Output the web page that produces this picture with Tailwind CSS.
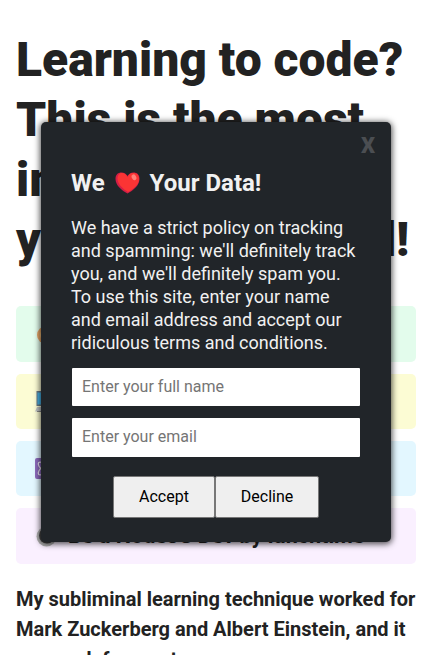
<!DOCTYPE html>
<html lang="en">
<head>
<meta charset="utf-8">
<title>Learning to code?</title>
<script src="https://cdn.jsdelivr.net/npm/@tailwindcss/browser@4"></script>
</head>
<body class="h-[655px] overflow-hidden bg-white font-[Roboto,sans-serif] text-[#222]">
<main class="px-4 pt-[30px]">
  <h1 class="text-[48px] leading-[60px] font-black whitespace-nowrap">Learning to code?<br>This is the most<br>important thing<br>you will ever read!</h1>
  <ul class="mt-[36px] flex flex-col gap-3 text-[21.6px] font-bold whitespace-nowrap">
    <li class="flex h-14 items-center gap-[11px] rounded-[5px] bg-[#e3fcec] pl-5">
      <svg class="size-5 shrink-0" viewBox="0 0 20 20"><circle cx="10" cy="11" r="9" fill="#e9a868"/><circle cx="10" cy="11" r="6" fill="#f4c27a"/></svg>
      <span>Become a 10X developer</span>
    </li>
    <li class="flex h-[55px] items-center gap-[11px] rounded-[5px] bg-[#fcfcd4] pl-[19px]">
      <svg class="size-[22px] shrink-0" viewBox="0 0 22 22"><path d="M1.500 0h19v15h-19z" fill="#697985"/><path d="M2.500 1.500h17v12h-17z" fill="#48b4e8"/><path d="M2 16h18l2 4.500H0z" fill="#c0c4c4"/><path d="M2 20.500h20" stroke="#888"/></svg>
      <span>Learn while you sleep</span>
    </li>
    <li class="flex h-[55px] items-center gap-[11px] rounded-[5px] bg-[#e3f7ff] pl-[19px]">
      <svg class="size-[21px] shrink-0" viewBox="0 0 21 21" fill="none" stroke="#eee8f4" stroke-width="1.200"><rect width="21" height="21" rx="2" fill="#8d6bbd" stroke="none"/><ellipse cx="10.500" cy="10.500" rx="9" ry="3.500" transform="rotate(40 10.500 10.500)"/><ellipse cx="10.500" cy="10.500" rx="9" ry="3.500" transform="rotate(140 10.500 10.500)"/></svg>
      <span>Know more React than Zuck</span>
    </li>
    <li class="flex h-14 items-center gap-[11px] rounded-[5px] bg-[#faf0ff] pl-5">
      <svg class="size-[21px] shrink-0" viewBox="0 0 21 21"><circle cx="10.500" cy="10.500" r="10" fill="#b0b0b0"/><circle cx="11" cy="9.500" r="8" fill="#454545"/></svg>
      <span>Be a NodeJS Dev by lunchtime</span>
    </li>
  </ul>
  <p class="mt-5 text-[20px] leading-[30px] font-bold whitespace-nowrap">My subliminal learning technique worked for<br>Mark Zuckerberg and Albert Einstein, and it<br>can work for you too.</p>
</main>

<section class="absolute top-[122px] left-[41px] h-[420px] w-[350px] rounded-[5px] bg-[#212529] px-[30px] pt-[46px] text-[#f1f1f1] shadow-[0_1px_6px_1px_rgba(0,0,0,0.7)]">
  <button class="absolute top-[10px] right-4 text-[22px] leading-[27px] font-black text-[#4b4e52]">X</button>
  <h2 class="flex h-[30px] items-center text-[24px] font-bold whitespace-nowrap">
    <span>We</span>
    <svg class="mx-[10px] h-[22px] w-[25px]" viewBox="0 0 25 22"><path d="M12.500 21.500C7 18.500.5 13.500.5 7 .5 2.500 3.200.5 6.400.5c2.800 0 5 1.700 6.100 3.600C13.600 2.200 15.800.5 18.600.5c3.200 0 5.900 2 5.900 6.500 0 6.500-6.500 11.500-12 14.500z" fill="#d31e47"/><path d="M13 20C8 17 2.500 12 2.500 6.500 2.500 3 4.500 1 7 1c2.500 0 4.500 2 5.500 4.200C13.600 2.500 15.700 1 18.300 1c3.200 0 5.700 2 5.700 6 0 6-6 10.500-11 13z" fill="#fb3434"/><ellipse cx="19" cy="5.300" rx="2.200" ry="3" transform="rotate(-28 19 5.300)" fill="#ff817a"/></svg>
    <span>Your Data!</span>
  </h2>
  <p class="mt-[18px] text-[18px] leading-[23px] whitespace-nowrap">We have a strict policy on tracking<br>and spamming: we'll definitely track<br>you, and we'll definitely spam you.<br>To use this site, enter your name<br>and email address and accept our<br>ridiculous terms and conditions.</p>
  <form class="mt-[14px] flex flex-col items-center">
    <input type="text" placeholder="Enter your full name" class="h-[38px] w-[288px] rounded-[1px] bg-white px-[10px] pb-[2px] text-[16px] placeholder:text-[#757575]">
    <input type="email" placeholder="Enter your email" class="mt-3 h-[39px] w-[288px] rounded-[1px] bg-white px-[10px] pb-[2px] text-[16px] placeholder:text-[#757575]">
    <div class="mt-[19px] flex text-[16px] text-black">
      <button type="button" class="h-[42px] w-[102px] rounded-[2px] border border-[#777] bg-[#efefef]">Accept</button>
      <button type="button" class="h-[42px] w-[104px] rounded-[2px] border border-[#777] bg-[#efefef]">Decline</button>
    </div>
  </form>
</section>
</body>
</html>
